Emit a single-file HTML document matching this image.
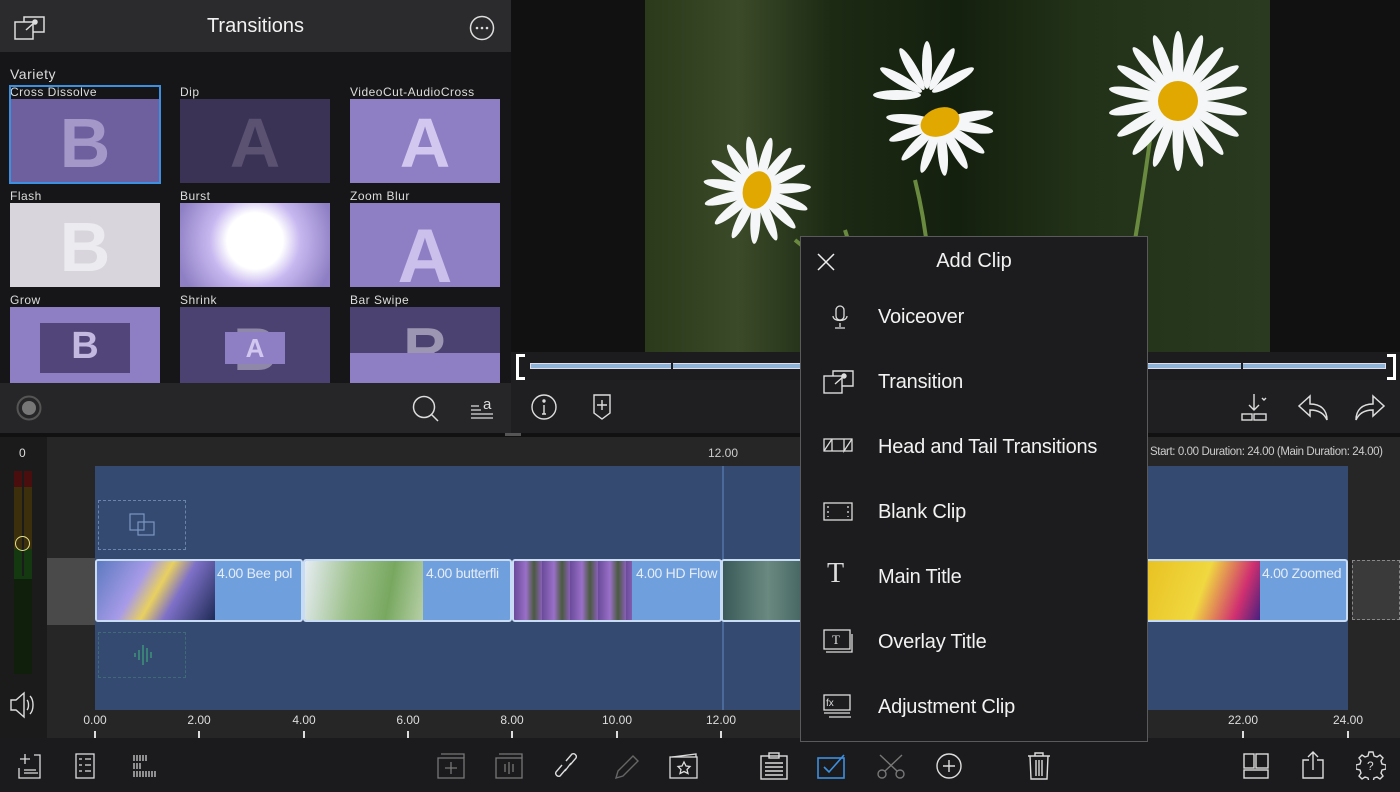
<!DOCTYPE html>
<html><head><meta charset="utf-8"><style>
*{margin:0;padding:0;box-sizing:border-box}
body{width:1400px;height:792px;background:#1b1b1d;position:relative;overflow:hidden;font-family:"Liberation Sans",sans-serif;color:#eee}
.a{position:absolute}
.lbl{position:absolute;font-size:12px;color:#ddd;letter-spacing:.5px}
.th{position:absolute;width:150px;height:84px;overflow:hidden}
.big{position:absolute;font-weight:bold;font-size:70px;width:100%;text-align:center;top:4px}
.rl{position:absolute;font-size:12px;color:#ddd;transform:translateX(-50%)}
.tk{position:absolute;width:2px;height:7px;background:#ddd;top:731px}
.clip{position:absolute;top:559px;height:63px;background:#6f9fdc;border:2px solid #c9dcf5;border-radius:3px;overflow:hidden}
.clip .t{position:absolute;right:0;top:4px;font-size:14px;color:#e4ecf7;white-space:nowrap;width:84px;overflow:hidden;transform-origin:left;letter-spacing:-.3px}
.mi{position:absolute;left:77px;font-size:20px;color:#f2f2f2;letter-spacing:-.2px}
.ic{position:absolute}
</style></head><body>
<!-- left panel -->
<div class="a" style="left:0;top:0;width:511px;height:52px;background:#2b2b2d"></div>
<div class="a" style="left:0;top:15px;width:511px;text-align:center;font-size:20px;color:#f2f2f2">Transitions</div>
<svg class="ic" style="left:14px;top:15px" width="32" height="26" viewBox="0 0 32 26" fill="none" stroke="#ddd" stroke-width="1.5"><rect x="1" y="7" width="18" height="17"/><path d="M10 7V2h20v15h-11"/><path d="M12 15l9-8"/><circle cx="21" cy="7" r="2" fill="#ddd"/></svg>
<svg class="ic" style="left:469px;top:15px" width="26" height="26"><circle cx="13" cy="13" r="11.5" fill="none" stroke="#ddd" stroke-width="1.5"/><circle cx="8" cy="13" r="1.3" fill="#ddd"/><circle cx="13" cy="13" r="1.3" fill="#ddd"/><circle cx="18" cy="13" r="1.3" fill="#ddd"/></svg>
<div class="a" style="left:0;top:52px;width:511px;height:331px;background:#161618"></div>
<div class="a" style="left:10px;top:66px;font-size:14px;color:#ddd;letter-spacing:.5px">Variety</div>
<div class="lbl" style="left:10px;top:85px">Cross Dissolve</div>
<div class="lbl" style="left:180px;top:85px">Dip</div>
<div class="lbl" style="left:350px;top:85px">VideoCut-AudioCross</div>
<div class="lbl" style="left:10px;top:189px">Flash</div>
<div class="lbl" style="left:180px;top:189px">Burst</div>
<div class="lbl" style="left:350px;top:189px">Zoom Blur</div>
<div class="lbl" style="left:10px;top:293px">Grow</div>
<div class="lbl" style="left:180px;top:293px">Shrink</div>
<div class="lbl" style="left:350px;top:293px">Bar Swipe</div>
<div class="a" style="left:9px;top:85px;width:152px;height:99px;border:2px solid #3d8fe0"></div>
<div class="th" style="left:11px;top:99px;width:148px;height:83px;background:#6e5f9e"><div class="big" style="color:rgba(200,190,230,.6)">B</div></div>
<div class="th" style="left:180px;top:99px;background:#3b3355"><div class="big" style="color:#5a5270">A</div></div>
<div class="th" style="left:350px;top:99px;background:#8e7fc4"><div class="big" style="color:#d2c8ef">A</div></div>
<div class="th" style="left:10px;top:203px;background:#d8d6dc"><div class="big" style="color:#ececf0">B</div></div>
<div class="th" style="left:180px;top:203px;background:radial-gradient(circle at 50% 45%,#fff 0,#fff 28px,#c8b8f0 45px,#8e7fc4 80px)"></div>
<div class="th" style="left:350px;top:203px;background:#8e7fc4"><div class="big" style="color:#cbbfec;top:10px;font-size:76px">A</div></div>
<div class="th" style="left:10px;top:307px;background:#8e7fc4;height:76px"><div class="a" style="left:30px;top:16px;width:90px;height:50px;background:#514579"></div><div class="big" style="color:#c2b8e0;font-size:38px;top:18px">B</div></div>
<div class="th" style="left:180px;top:307px;background:#4c4272;height:76px"><div class="big" style="color:#8f88a8;font-size:60px;top:8px">B</div><div class="a" style="left:45px;top:25px;width:60px;height:32px;background:#8e7fc4"></div><div class="big" style="color:#d2c8ef;font-size:26px;top:26px">A</div></div>
<div class="th" style="left:350px;top:307px;background:#4c4272;height:76px"><div class="big" style="color:#9d96b2;font-size:60px;top:8px">R</div><div class="a" style="left:0;top:46px;width:150px;height:30px;background:#8e7fc4"></div></div>
<div class="a" style="left:0;top:383px;width:511px;height:50px;background:#262628"></div>
<svg class="ic" style="left:16px;top:395px" width="26" height="26"><circle cx="13" cy="13" r="11.5" fill="none" stroke="#555" stroke-width="2"/><circle cx="13" cy="13" r="7" fill="#777"/></svg>
<svg class="ic" style="left:411px;top:395px" width="30" height="28" fill="none" stroke="#ddd" stroke-width="1.5"><circle cx="13" cy="12" r="10.5"/><path d="M20 19l7 7"/></svg>
<svg class="ic" style="left:469px;top:394px" width="26" height="28" fill="none" stroke="#ddd" stroke-width="1.3"><path d="M2 12h8M2 16h10M2 20h22M2 24h22"/><text x="14" y="15" font-size="15" fill="#ddd" stroke="none" font-family="Liberation Sans">a</text></svg>
<!-- video area -->
<div class="a" style="left:511px;top:0;width:889px;height:352px;background:#111"></div>
<svg class="ic" style="left:645px;top:0" width="625" height="352" viewBox="0 0 625 352">
<defs>
<linearGradient id="bg" x1="0" x2="1" y1="0" y2="0"><stop offset="0" stop-color="#2a3a1a"/><stop offset=".15" stop-color="#3b4a28"/><stop offset=".3" stop-color="#1c2a14"/><stop offset=".5" stop-color="#14200e"/><stop offset=".7" stop-color="#223218"/><stop offset="1" stop-color="#2a3a20"/></linearGradient>
<ellipse id="p" cx="0" cy="-30" rx="5" ry="24" fill="#f4f6f8"/>
<ellipse id="q" cx="0" cy="-40" rx="5.5" ry="30" fill="#f4f6f8"/>
</defs>
<rect width="625" height="352" fill="url(#bg)"/>
<path d="M200 230 Q220 290 215 352M270 180 Q290 260 285 352M505 140 Q490 250 470 352M150 240 Q200 280 240 320" stroke="#6a8a40" stroke-width="4" fill="none"/>
<g transform="translate(112,190) rotate(15)"><use href="#p"/><use href="#p" transform="rotate(24)"/><use href="#p" transform="rotate(48)"/><use href="#p" transform="rotate(72)"/><use href="#p" transform="rotate(96)"/><use href="#p" transform="rotate(120)"/><use href="#p" transform="rotate(144)"/><use href="#p" transform="rotate(168)"/><use href="#p" transform="rotate(192)"/><use href="#p" transform="rotate(216)"/><use href="#p" transform="rotate(240)"/><use href="#p" transform="rotate(264)"/><use href="#p" transform="rotate(288)"/><use href="#p" transform="rotate(312)"/><use href="#p" transform="rotate(336)"/><ellipse rx="14" ry="19" fill="#e0a800"/></g>
<g transform="translate(282,95) rotate(-30)"><use href="#p"/><use href="#p" transform="rotate(30)"/><use href="#p" transform="rotate(60)"/><use href="#p" transform="rotate(90)"/><use href="#p" transform="rotate(300)"/><use href="#p" transform="rotate(330)"/></g>
<g transform="translate(295,122)"><use href="#p" transform="rotate(100)"/><use href="#p" transform="rotate(125)"/><use href="#p" transform="rotate(150)"/><use href="#p" transform="rotate(175)"/><use href="#p" transform="rotate(200)"/><use href="#p" transform="rotate(225)"/><use href="#p" transform="rotate(250)"/><use href="#p" transform="rotate(80)"/><use href="#p" transform="rotate(275)"/><ellipse rx="20" ry="14" fill="#e0a800" transform="rotate(-20)"/></g>
<g transform="translate(533,101)"><use href="#q"/><use href="#q" transform="rotate(20)"/><use href="#q" transform="rotate(40)"/><use href="#q" transform="rotate(60)"/><use href="#q" transform="rotate(80)"/><use href="#q" transform="rotate(100)"/><use href="#q" transform="rotate(120)"/><use href="#q" transform="rotate(140)"/><use href="#q" transform="rotate(160)"/><use href="#q" transform="rotate(180)"/><use href="#q" transform="rotate(200)"/><use href="#q" transform="rotate(220)"/><use href="#q" transform="rotate(240)"/><use href="#q" transform="rotate(260)"/><use href="#q" transform="rotate(280)"/><use href="#q" transform="rotate(300)"/><use href="#q" transform="rotate(320)"/><use href="#q" transform="rotate(340)"/><circle r="20" fill="#e0a800"/></g>
</svg>
<!-- scrubber -->
<div class="a" style="left:511px;top:352px;width:889px;height:28px;background:#1c1c1e"></div>
<div class="a" style="left:516px;top:354px;width:9px;height:26px;border:3px solid #fff;border-right:none"></div>
<div class="a" style="left:1387px;top:354px;width:9px;height:26px;border:3px solid #fff;border-left:none"></div>
<div class="a" style="left:530px;top:363px;width:856px;height:6px;background:#8fb3d6;border:1px solid #dde"></div>
<div class="a" style="left:671px;top:362px;width:2px;height:8px;background:#1c1c1e"></div>
<div class="a" style="left:1241px;top:362px;width:2px;height:8px;background:#1c1c1e"></div>
<div class="a" style="left:511px;top:380px;width:889px;height:53px;background:#1f1f21"></div>
<svg class="ic" style="left:531px;top:394px" width="26" height="26" fill="none" stroke="#ddd" stroke-width="1.4"><circle cx="13" cy="13" r="12"/><path d="M13 11v9M11 20h4"/><circle cx="13" cy="7" r="1" fill="#ddd"/></svg>
<svg class="ic" style="left:592px;top:393px" width="20" height="28" fill="none" stroke="#ddd" stroke-width="1.4"><path d="M2 2h16v18l-8 6-8-6z M10 7v10M5 12h10"/></svg>
<svg class="ic" style="left:1240px;top:392px" width="32" height="30" fill="none" stroke="#ddd" stroke-width="1.4"><path d="M14 2v16M9 13l5 5 5-5"/><rect x="2" y="22" width="10" height="6"/><rect x="14" y="22" width="12" height="6"/><path d="M22 6l2 2 2-2"/></svg>
<svg class="ic" style="left:1296px;top:394px" width="34" height="28" fill="none" stroke="#ddd" stroke-width="1.5"><path d="M14 2L3 12l11 10v-6c8 0 14 3 17 10 0-10-6-16-17-16z"/></svg>
<svg class="ic" style="left:1353px;top:394px" width="34" height="28" fill="none" stroke="#ddd" stroke-width="1.5"><path d="M20 2l11 10-11 10v-6c-8 0-14 3-17 10 0-10 6-16 17-16z"/></svg>
<!-- timeline -->
<div class="a" style="left:0;top:433px;width:1400px;height:305px;background:#262627"></div>
<div class="a" style="left:0;top:433px;width:47px;height:305px;background:#1b1b1b"></div>
<div class="a" style="left:0;top:433px;width:1400px;height:4px;background:#111"></div>
<div class="a" style="left:505px;top:433px;width:16px;height:3px;background:#555"></div>
<div class="a" style="left:19px;top:446px;font-size:12px;color:#ddd">0</div>
<div class="a" style="left:14px;top:471px;width:18px;height:16px;background:#4a0e0e"></div>
<div class="a" style="left:14px;top:487px;width:18px;height:62px;background:#3c300c"></div>
<div class="a" style="left:14px;top:549px;width:18px;height:30px;background:#14380f"></div>
<div class="a" style="left:14px;top:579px;width:18px;height:95px;background:#0f1f0c"></div>
<div class="a" style="left:22px;top:471px;width:2px;height:105px;background:#1b1b1b"></div>
<div class="a" style="left:15px;top:536px;width:15px;height:15px;border:1.5px solid #e6e08a;border-radius:50%"></div>
<svg class="ic" style="left:8px;top:690px" width="30" height="30" fill="none" stroke="#ddd" stroke-width="1.4"><path d="M3 10h5l8-7v24l-8-7H3z"/><path d="M19 10c2 2 2 8 0 10M22 6c4 4 4 14 0 18"/></svg>
<div class="a" style="left:47px;top:558px;width:48px;height:67px;background:#4a4a4a"></div>
<div class="a" style="left:95px;top:466px;width:1253px;height:244px;background:#344a70"></div>
<div class="a" style="left:722px;top:466px;width:2px;height:272px;background:#4a6a9a"></div>
<div class="a" style="left:708px;top:446px;font-size:12px;color:#ccc">12.00</div>
<div class="a" style="left:1150px;top:446px;font-size:11.5px;color:#ccc;white-space:nowrap;letter-spacing:-.4px">Start: 0.00 Duration: 24.00 (Main Duration: 24.00)</div>
<div class="a" style="left:98px;top:500px;width:88px;height:50px;border:1px dashed #6a84ad"></div>
<svg class="ic" style="left:128px;top:512px" width="30" height="26" fill="none" stroke="#7a96c4" stroke-width="1.2"><rect x="2" y="2" width="14" height="16"/><rect x="10" y="10" width="16" height="13"/></svg>
<div class="a" style="left:98px;top:632px;width:88px;height:46px;border:1px dashed #3f6a78"></div>
<svg class="ic" style="left:133px;top:642px" width="22" height="26" stroke="#3d9a7a" stroke-width="1.4"><path d="M2 11v4M6 8v10M10 3v20M14 6v14M18 10v6"/></svg>
<div class="clip" style="left:95px;width:208px"><div class="a" style="left:0;top:0;width:118px;height:63px;background:linear-gradient(120deg,#5c7ac0,#a89be8 35%,#e8d060 50%,#7e70c8 65%,#1a2850)"></div><div class="t">4.00 Bee pol</div></div>
<div class="clip" style="left:303px;width:209px"><div class="a" style="left:0;top:0;width:118px;height:63px;background:linear-gradient(100deg,#e6ecf2,#9cc08a 40%,#78a860 70%,#b8d0a8)"></div><div class="t">4.00 butterfli</div></div>
<div class="clip" style="left:512px;width:210px"><div class="a" style="left:0;top:0;width:118px;height:63px;background:repeating-linear-gradient(90deg,#6a4a9a 0,#9a70c8 12px,#4a5a40 20px,#8a60b8 28px)"></div><div class="t">4.00 HD Flow</div></div>
<div class="clip" style="left:721px;width:90px"><div class="a" style="left:0;top:0;width:90px;height:63px;background:linear-gradient(90deg,#3a5a5a,#6a8a80,#3a5a5a)"></div></div>
<div class="clip" style="left:1140px;width:208px"><div class="a" style="left:0;top:0;width:118px;height:63px;background:linear-gradient(110deg,#e8c020,#f0d840 50%,#d03070 80%,#402080)"></div><div class="t">4.00 Zoomed</div></div>
<div class="a" style="left:1352px;top:560px;width:48px;height:60px;border:1px dashed #888;background:#3a3a3a"></div>
<div class="a" style="left:47px;top:710px;width:1353px;height:28px;background:#262627"></div>
<div class="rl" style="left:95px;top:713px">0.00</div><div class="rl" style="left:199px;top:713px">2.00</div><div class="rl" style="left:304px;top:713px">4.00</div><div class="rl" style="left:408px;top:713px">6.00</div><div class="rl" style="left:512px;top:713px">8.00</div><div class="rl" style="left:617px;top:713px">10.00</div><div class="rl" style="left:721px;top:713px">12.00</div><div class="rl" style="left:1243px;top:713px">22.00</div><div class="rl" style="left:1348px;top:713px">24.00</div>
<div class="tk" style="left:94px"></div><div class="tk" style="left:198px"></div><div class="tk" style="left:303px"></div><div class="tk" style="left:407px"></div><div class="tk" style="left:511px"></div><div class="tk" style="left:616px"></div><div class="tk" style="left:720px"></div><div class="tk" style="left:1242px"></div><div class="tk" style="left:1347px"></div>
<!-- bottom toolbar -->
<div class="a" style="left:0;top:738px;width:1400px;height:54px;background:#1b1b1d"></div>
<svg class="ic" style="left:16px;top:752px" width="26" height="28" fill="none" stroke="#ddd" stroke-width="1.3"><path d="M9 2v10M4 7h10M18 3h6v23H3V16"/><path d="M8 18h12M8 21h14"/></svg>
<svg class="ic" style="left:74px;top:752px" width="24" height="28" fill="none" stroke="#ddd" stroke-width="1.3"><rect x="2" y="2" width="18" height="24"/><path d="M5 7h3M11 7h6M5 13h3M11 13h6M5 19h3M11 19h6"/></svg>
<svg class="ic" style="left:132px;top:753px" width="28" height="26" stroke="#ddd" stroke-width="1.2"><path d="M2 2v6M5 2v6M8 2v6M11 2v6M14 2v6M2 10v6M5 10v6M8 10v6M2 18v6M5 18v6M8 18v6M11 18v6M14 18v6M17 18v6M20 18v6M23 18v6"/></svg>
<svg class="ic" style="left:436px;top:752px" width="32" height="28" fill="none" stroke="#777" stroke-width="1.3"><rect x="2" y="6" width="26" height="20"/><path d="M5 2h23v4M15 10v12M9 16h12"/></svg>
<svg class="ic" style="left:494px;top:752px" width="32" height="28" fill="none" stroke="#777" stroke-width="1.3"><rect x="2" y="6" width="26" height="20"/><path d="M5 2h23v4M11 12v8M15 10v12M19 12v8"/></svg>
<svg class="ic" style="left:554px;top:752px" width="28" height="30" fill="none" stroke="#ddd" stroke-width="1.4"><path d="M12 17l-6 7a3 3 0 01-4-4l6-7M16 13l6-7a3 3 0 00-4-4l-6 7M11 19l6-8"/></svg>
<svg class="ic" style="left:612px;top:752px" width="28" height="30" fill="none" stroke="#666" stroke-width="1.4"><path d="M4 26l2-7 15-15 5 5-15 15z"/></svg>
<svg class="ic" style="left:668px;top:752px" width="32" height="28" fill="none" stroke="#ddd" stroke-width="1.3"><rect x="2" y="5" width="27" height="21"/><path d="M4 5l24-3v3M16 10l2 4 4 .5-3 3 1 4-4-2-4 2 1-4-3-3 4-.5z"/></svg>
<svg class="ic" style="left:759px;top:751px" width="30" height="30" fill="none" stroke="#ddd" stroke-width="1.4"><rect x="2" y="5" width="26" height="23"/><rect x="10" y="2" width="10" height="5"/><path d="M6 12h18M6 16h18M6 20h18M6 24h18"/></svg>
<svg class="ic" style="left:816px;top:752px" width="32" height="28" fill="none" stroke="#3d8fe0" stroke-width="1.6"><rect x="2" y="6" width="26" height="20"/><path d="M8 15l5 5 15-17"/></svg>
<svg class="ic" style="left:876px;top:752px" width="30" height="28" fill="none" stroke="#777" stroke-width="1.4"><circle cx="6" cy="22" r="4"/><circle cx="24" cy="22" r="4"/><path d="M9 19L26 3M21 19L4 3"/></svg>
<svg class="ic" style="left:935px;top:752px" width="28" height="28" fill="none" stroke="#ddd" stroke-width="1.4"><circle cx="14" cy="14" r="12"/><path d="M14 8v12M8 14h12"/></svg>
<svg class="ic" style="left:1026px;top:751px" width="26" height="30" fill="none" stroke="#ddd" stroke-width="1.4"><path d="M2 5h22M9 5V2h8v3M4 5l1 23h16l1-23M10 9v16M13 9v16M16 9v16"/></svg>
<svg class="ic" style="left:1242px;top:752px" width="28" height="28" fill="none" stroke="#ddd" stroke-width="1.4"><rect x="2" y="2" width="10" height="14"/><rect x="14" y="2" width="12" height="14"/><rect x="2" y="18" width="24" height="8"/></svg>
<svg class="ic" style="left:1300px;top:750px" width="28" height="30" fill="none" stroke="#ddd" stroke-width="1.4"><path d="M9 10H3v18h20V10h-6M13 20V2M8 7l5-5 5 5"/></svg>
<svg class="ic" style="left:1356px;top:750px" width="30" height="30" fill="none" stroke="#ddd" stroke-width="1.4"><path d="M13 2h4l1 4 3 1 3-2 3 3-2 3 1 3 4 1v4l-4 1-1 3 2 3-3 3-3-2-3 1-1 4h-4l-1-4-3-1-3 2-3-3 2-3-1-3-4-1v-4l4-1 1-3-2-3 3-3 3 2 3-1z"/><text x="11" y="20" font-size="12" fill="#ddd" stroke="none" font-family="Liberation Sans">?</text></svg>
<!-- popup -->
<div class="a" style="left:800px;top:236px;width:348px;height:506px;background:#1c1c1e;border:1px solid #5a5a5c">
<svg class="ic" style="left:15px;top:15px" width="20" height="20" stroke="#eee" stroke-width="1.5"><path d="M2 2l16 16M18 2L2 18"/></svg>
<div class="a" style="left:0;top:13px;width:346px;text-align:center;font-size:20px;color:#f2f2f2">Add Clip</div>
<svg class="ic" style="left:28px;top:67px" width="22" height="26" fill="none" stroke="#ddd" stroke-width="1.3"><rect x="7" y="2" width="8" height="14" rx="4"/><path d="M4 12c0 6 14 6 14 0M11 19v4M6 24h10"/></svg>
<div class="mi" style="top:69px">Voiceover</div>
<svg class="ic" style="left:22px;top:132px" width="32" height="26" fill="none" stroke="#ddd" stroke-width="1.4"><rect x="1" y="7" width="18" height="17"/><path d="M10 7V2h20v15h-11M12 15l9-8"/><circle cx="21" cy="7" r="2" fill="#ddd"/></svg>
<div class="mi" style="top:134px">Transition</div>
<svg class="ic" style="left:22px;top:199px" width="32" height="20" fill="none" stroke="#ddd" stroke-width="1.3"><rect x="1" y="3" width="28" height="12"/><path d="M1 15l8-12M9 3v12M21 3v12l8-12"/></svg>
<div class="mi" style="top:199px">Head and Tail Transitions</div>
<svg class="ic" style="left:22px;top:264px" width="32" height="22" fill="none" stroke="#ddd" stroke-width="1.3"><rect x="1" y="2" width="28" height="17"/><path d="M5 5v2M5 10v2M5 15v1M25 5v2M25 10v2M25 15v1"/></svg>
<div class="mi" style="top:264px">Blank Clip</div>
<div class="a" style="left:26px;top:321px;font-family:'Liberation Serif',serif;font-size:28px;color:#ddd">T</div>
<div class="mi" style="top:329px">Main Title</div>
<svg class="ic" style="left:22px;top:391px" width="32" height="28" fill="none" stroke="#ddd" stroke-width="1.3"><rect x="1" y="2" width="26" height="19"/><path d="M3 24h26V6"/><text x="9" y="16" font-size="13" fill="#ddd" stroke="none" font-family="Liberation Serif">T</text></svg>
<div class="mi" style="top:394px">Overlay Title</div>
<svg class="ic" style="left:22px;top:456px" width="32" height="28" fill="none" stroke="#ddd" stroke-width="1.3"><rect x="1" y="2" width="26" height="15"/><path d="M1 20h26M6 24h22"/><text x="3" y="13" font-size="10" fill="#ddd" stroke="none" font-family="Liberation Sans">fx</text></svg>
<div class="mi" style="top:459px">Adjustment Clip</div>
</div>
</body></html>
